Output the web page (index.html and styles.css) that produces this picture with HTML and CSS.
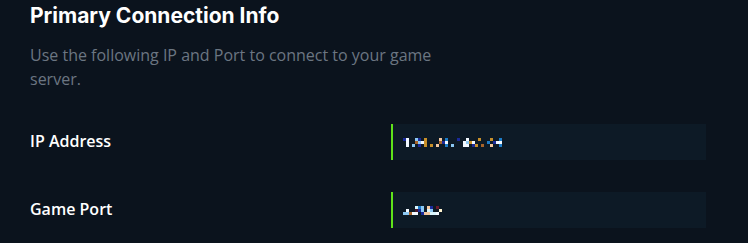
FILE: index.html
```html
<!DOCTYPE html>
<html lang="en">
<head>
  <meta charset="UTF-8" />
  <title>Primary Connection Info</title>
  <link rel="stylesheet" href="styles.css">
</head>
<body>

  <section class="connection">
    <h2 class="connection-title">Primary Connection Info</h2>
    <p class="connection-desc">Use the following IP and Port to connect to your game server.</p>

    <div class="info-list">
      <div class="info-row">
        <div class="info-label">IP Address</div>
        <div class="info-value">
          <!-- redacted value, drawn as a mosaic -->
          <div class="mosaic"
               data-rows="nw..ln.g....p.b...n..w...g...g..b|.w..olwg....onw.....wlgw....b.nww|.w.l.n.g.g.p..b.l...ww.ng.o..p..b"></div>
        </div>
      </div>

      <div class="info-row">
        <div class="info-label">Game Port</div>
        <div class="info-value">
          <div class="mosaic"
               data-rows="....cbl.pn.m.|.w..rnl.cl..y|lloww.nppccw."></div>
        </div>
      </div>
    </div>
  </section>

  <script>
    const colors = {
      n: '#1a2a9a', w: '#f2f8ff', l: '#8cc8f2', b: '#1c7cc8', g: '#c8902a',
      o: '#a8642a', p: '#f4c8a0', c: '#d8f4fc', m: '#6a1a2a', r: '#4a1a2a', y: '#fff4d0'
    };

    document.querySelectorAll('.mosaic').forEach(el => {
      const rows = el.dataset.rows.split('|');
      el.style.gridTemplateColumns = `repeat(${rows[0].length}, 3px)`;
      rows.forEach(row => {
        for (const ch of row) {
          const cell = document.createElement('span');
          if (colors[ch]) cell.style.background = colors[ch];
          el.appendChild(cell);
        }
      });
    });
  </script>

</body>
</html>
```

FILE: styles.css
```css
body {
  margin: 0;
  padding: 2px 30px 0;
  background-color: #0b131d;
  font-family: "Open Sans", sans-serif;
  color: #fff;
}

.connection-title {
  margin: 0;
  font-family: Inter, sans-serif;
  font-size: 21px;
  font-weight: 700;
  line-height: 28px;
}

.connection-desc {
  margin: 13px 0 33px;
  max-width: 420px;
  font-size: 16px;
  line-height: 24px;
  color: #6b7682;
}

.info-list {
  display: flex;
  flex-direction: column;
  gap: 32px;
}

.info-row {
  display: grid;
  grid-template-columns: 361px 315px;
  align-items: center;
}

.info-label {
  font-size: 16px;
  font-weight: 600;
  margin-top: -2px;
}

.info-value {
  height: 36px;
  display: flex;
  align-items: center;
  padding-left: 10px;
  background-color: #0d1a26;
  border-left: 2px solid #5fe21a;
}

.mosaic {
  display: grid;
  grid-auto-rows: 3px;
  margin-top: 1px;
}
```
